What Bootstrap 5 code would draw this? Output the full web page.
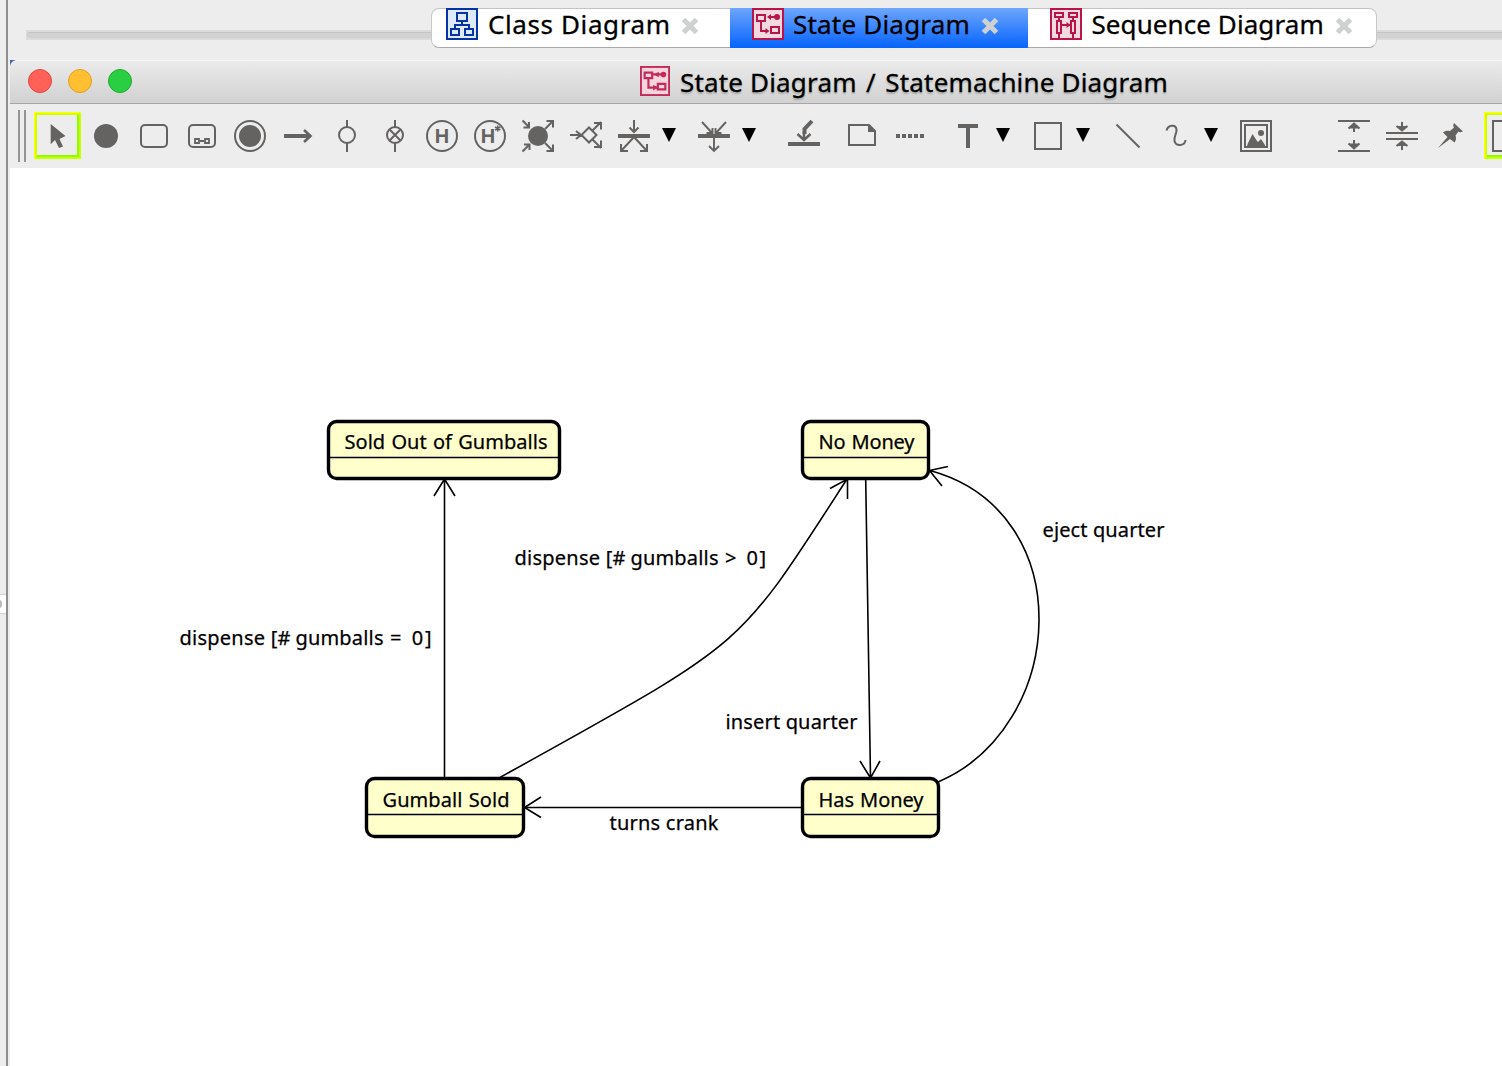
<!DOCTYPE html>
<html lang="en">
<head>
<meta charset="utf-8">
<title>State Diagram / Statemachine Diagram</title>
<link href="https://cdn.jsdelivr.net/npm/bootstrap@5.3.0/dist/css/bootstrap.min.css" rel="stylesheet">
<style>
body{width:1502px;height:1066px;overflow:hidden;background:#ededed;color:#000;font-family:"Noto Sans","Open Sans",sans-serif}
svg{display:block;flex:none}
.side-strip{width:10px;background:linear-gradient(90deg,#ededed 6px,#8e8e8e 6px,#8e8e8e 8px,#ededed 8px)}
.side-tab{height:20px;width:6px;margin-top:594px;background:#fff;border-top:1px solid #d2d2d2;border-bottom:1px solid #d2d2d2;overflow:hidden}
.side-knob{width:6px;height:8px;margin-left:-4px;border-radius:4px;background:#bbb}
.tab-zone{height:60px;padding-top:8px}
.rail{left:16px;right:0;top:30px;height:10px;background:#dbdbdb}
.rail::before{content:"";position:absolute;left:1px;right:0;top:2px;height:6px;border-radius:4px 0 0 4px;background:#d2d2d2;border-top:1px solid #c4c4c4;border-bottom:1px solid #cfcfcf}
.seg{margin-left:421px;height:40px;width:946px}
.seg-tab{height:40px;font-size:26px;line-height:32px;background:#fff;border-top:1px solid #c4c4c4;border-bottom:1px solid #a8a8a8;white-space:nowrap}
.seg-tab>svg,.seg-tab>span{margin-top:-1px}
.seg-tab>span,.win-name{-webkit-text-stroke:.3px #000}
.seg-first{width:299px;padding-left:14px;border-left:1px solid #c8c8c8;border-radius:8px 0 0 8px}
.seg-on{width:298px;padding-left:22px;border:0;background:linear-gradient(#6ea6fc,#0563ff)}
.seg-on>svg,.seg-on>span{margin-top:0}
.seg-last{width:349px;padding-left:22px;border-right:1px solid #c8c8c8;border-radius:0 8px 8px 0}
.win-title{height:44px;background:linear-gradient(#ebebeb,#d1d1d1);border-top:1px solid #f6f6f6;border-bottom:1px solid #a6a6a6;font-size:26px;line-height:38px}
.corner{left:0;top:-1px}
.lights{gap:16px;padding-left:18px;width:630px;height:40px}
.light{width:24px;height:24px;border-radius:50%;border:1px solid}
.win-name{letter-spacing:.17px;margin-left:10px;margin-top:2px;text-shadow:0 2px 2px rgba(0,0,0,.22);white-space:nowrap}
.slash{margin:0 2.500px}
.tools{height:64px;padding-left:8px;overflow:hidden}
.grip{width:8px;height:52px;margin:6px 8px 0 0;border-left:2px solid #949494;border-right:2px solid #949494}
.tools svg{fill:none;stroke:#656262;stroke-width:2;margin-top:8px}
.tools .f{fill:#656262;stroke:none}
.tools .k{fill:#000;stroke:none}
.g10{margin-left:10px}.g50{margin-left:50px}
.sheet{height:898px;background:#fff}
.nodes rect{fill:#ffffcc;stroke:#000;stroke-width:3.400}
.edges{fill:none;stroke:#000;stroke-width:1.6}
.labels{font-size:20px;fill:#000;stroke:#000;stroke-width:.25}
</style>
<script src="https://cdn.jsdelivr.net/npm/bootstrap@5.3.0/dist/js/bootstrap.bundle.min.js"></script>
</head>
<body class="d-flex m-0">
<aside class="side-strip flex-shrink-0 h-100"><div class="side-tab d-flex align-items-center"><div class="side-knob"></div></div></aside>
<main class="flex-grow-1 d-flex flex-column overflow-hidden">
  <nav class="tab-zone position-relative flex-shrink-0">
    <div class="rail position-absolute"></div>
    <div class="seg d-flex position-relative">
      <div class="seg-tab seg-first d-flex">
        <svg width="32" height="32" fill="none" stroke="#0634a6" stroke-width="2"><rect x="1" y="1" width="30" height="30" fill="#dee9fa"/><path d="M11 5h10v8H11zM5 21h8v6H5zM19 21h8v6h-8zM16 13v4M9 21v-4h14v4"/></svg>
        <span style="letter-spacing:.6px;margin-left:10px">Class Diagram</span>
        <svg class="ms-auto" style="margin-right:30px" width="20" height="32"><path d="M3.500 11.500l13 13M16.500 11.500l-13 13" stroke="#cdd1d0" stroke-width="5"/></svg>
      </div>
      <div class="seg-tab seg-on d-flex">
        <svg width="32" height="32" fill="none" stroke="#b8164a" stroke-width="2"><rect x="1" y="1" width="30" height="30" fill="#f4d9e1"/><path d="M5 7h8v6H5zM19 19h8v6h-8zM9 13v10h7M16 9h9"/><circle cx="25" cy="9" r="3" fill="#b8164a" stroke="none"/><path d="M15 9l4-3v6zM17.500 23l-4-3v6z" fill="#b8164a" stroke="none"/></svg>
        <span style="letter-spacing:.2px;margin-left:9px">State Diagram</span>
        <svg class="ms-auto" style="margin-right:28px" width="20" height="32"><path d="M3.500 11.500l13 13M16.500 11.500l-13 13" stroke="#cdd1d0" stroke-width="5"/></svg>
      </div>
      <div class="seg-tab seg-last d-flex">
        <svg width="32" height="32" fill="none" stroke="#b8164a" stroke-width="2"><rect x="1" y="1" width="30" height="30" fill="#f4d9e1"/><path d="M5 5h8v4H5zM19 5h8v4h-8zM9 9v4M23 9v4M7 13h4v12H7zM21 13h4v12h-4zM9 25v6M23 25v6M11 17h10"/><path d="M20.500 17l-4-3v6z" fill="#b8164a" stroke="none"/></svg>
        <span style="letter-spacing:.08px;margin-left:9.500px">Sequence Diagram</span>
        <svg class="ms-auto" style="margin-right:22px" width="20" height="32"><path d="M3.500 11.500l13 13M16.500 11.500l-13 13" stroke="#cdd1d0" stroke-width="5"/></svg>
      </div>
    </div>
  </nav>
  <header class="win-title d-flex position-relative flex-shrink-0">
    <svg class="corner position-absolute" width="6" height="6"><path d="M0 0H6Q1 1 0 6Z" fill="#3f66b0"/></svg>
    <div class="lights d-flex align-items-center flex-shrink-0">
      <span class="light" style="background:#ff6058;border-color:#e2463f"></span>
      <span class="light" style="background:#ffbf30;border-color:#dfa023"></span>
      <span class="light" style="background:#29ce42;border-color:#1dad2b"></span>
    </div>
    <svg width="30" height="30" viewBox="0 0 32 32" style="margin-top:5px" fill="none" stroke="#c22a59" stroke-width="2"><rect x="1" y="1" width="30" height="30" fill="#f6d5de"/><path d="M5 7h8v6H5zM19 19h8v6h-8zM9 13v10h10M13 9h12" stroke-width="2.300"/><circle cx="25" cy="9" r="3" fill="#c22a59" stroke="none"/><path d="M15 9l5-3v6zM19 23l-5-3v6z" fill="#c22a59" stroke="none"/></svg>
    <span class="win-name">State Diagram <span class="slash">/</span> Statemachine Diagram</span>
  </header>
  <div class="tools d-flex flex-shrink-0">
    <div class="grip flex-shrink-0"></div>
    <svg width="48" height="48"><rect x="1.500" y="1.500" width="44" height="44" stroke="#ccff00" stroke-width="3"/><path d="M.5 47V.5H47" stroke="#ffff00" stroke-width="1.500"/><path d="M3 44H44V3" stroke="#8cff00"/><path class="f" d="M16.700 12V32.300L21 28L25 36L29 34.500L25.500 27L31.500 24Z"/></svg>
    <svg width="48" height="48"><circle class="f" cx="24" cy="24" r="12"/></svg>
    <svg width="48" height="48"><rect x="11" y="13" width="26" height="22" rx="4"/></svg>
    <svg width="48" height="48"><rect x="11" y="13" width="26" height="22" rx="4"/><path d="M17 27h4v4h-4zM27 27h4v4h-4zM22 29h4" stroke-width="1.800"/></svg>
    <svg width="48" height="48"><circle cx="24" cy="24" r="15"/><circle class="f" cx="24" cy="24" r="11"/></svg>
    <svg width="48" height="48"><path d="M10 24H35" stroke-width="4"/><path d="M30 18L36.500 24L30 30" stroke-width="2.600"/></svg>
    <svg width="48" height="48"><circle cx="25" cy="23" r="8"/><path d="M25 8v7M25 31v9"/></svg>
    <svg width="48" height="48"><circle cx="25" cy="23" r="8"/><path d="M25 8v7M25 31v9M19.500 17.500l11 11M30.500 17.500l-11 11"/></svg>
    <svg width="48" height="48"><circle cx="24" cy="24" r="15"/><text class="f" x="24" y="31" text-anchor="middle" font-family="Liberation Sans" font-weight="bold" font-size="20">H</text></svg>
    <svg width="48" height="48"><circle cx="24" cy="24" r="15"/><text class="f" x="22" y="31" text-anchor="middle" font-family="Liberation Sans" font-weight="bold" font-size="20">H</text><path d="M31.700 13.500v6M29 15l5.400 3M34.400 15L29 18" stroke-width="1.600"/></svg>
    <svg width="48" height="48"><circle class="f" cx="24" cy="24" r="10"/><path d="M8.500 8.500L15 15M15 10v5.500H9.500M8.500 39.500L15 33M10 32.500h5.500V38M31 17l8-8M32.500 9H39v6.500M31 31l8 8M39 32.500V39h-6.500"/></svg>
    <svg width="48" height="48"><path d="M8 23H19M14 19l5 4l-5 4M27 15.500L34.500 23L27 30.500L19.500 23ZM30.500 18.500L39 10M32 11H39V17.500M30.500 27.500L39 36M32 35H39V28.500"/></svg>
    <svg width="48" height="48"><path d="M8 24H40" stroke-width="4"/><path d="M24 8V20M19.500 15.500L24 20L28.500 15.500M24 25L11.500 38.500M24 25L36.500 38.500M11 32V39H18M37 32V39H30"/></svg>
    <svg width="32" height="48"><path class="k" d="M4 16H18L11 30Z"/></svg>
    <svg width="48" height="48"><path d="M8 24H40" stroke-width="4"/><path d="M12 10L23 22M36 10L25 22M16.500 21H22.500V16M31.500 21H25.500V16M24 26V38.500M19 34L24 39L29 34" stroke-width="1.900"/></svg>
    <svg width="32" height="48"><path class="k" d="M4 16H18L11 30Z"/></svg>
    <svg class="g10" width="48" height="48"><path d="M8 32H40" stroke-width="4"/><path d="M32 9L24.500 17V22" stroke-width="4"/><path d="M24 20V28M17.500 22L24 28L30.500 22" stroke-width="2.500"/></svg>
    <svg class="g10" width="48" height="48"><path d="M11 13H31L37 19V33H11Z"/><path class="f" d="M30 12V20H38Z"/></svg>
    <svg width="48" height="48"><path d="M10 24H38" stroke-width="4" stroke-dasharray="4 2"/></svg>
    <svg class="g10" width="48" height="48"><path d="M14 14H34M24 14V36" stroke-width="4"/></svg>
    <svg width="32" height="48"><path class="k" d="M4 16H18L11 30Z"/></svg>
    <svg width="48" height="48"><rect x="11" y="11" width="26" height="26"/></svg>
    <svg width="32" height="48"><path class="k" d="M4 16H18L11 30Z"/></svg>
    <svg width="48" height="48"><path d="M12.500 12.500L35.500 35.500"/></svg>
    <svg width="48" height="48"><path d="M14.500 18.500C16 12.500 24 12 24.500 17.500C25 21.500 21.500 25 22.500 29C24 35 33 34 33.500 28"/></svg>
    <svg width="32" height="48"><path class="k" d="M4 16H18L11 30Z"/></svg>
    <svg width="48" height="48"><path d="M9 9H39V39H9ZM13 13H35V35H13Z"/><path class="f" d="M15 34L16 31L20.500 22L25 29L26 30L29 27L33 33V34Z"/><circle class="f" cx="29" cy="21" r="3"/></svg>
    <svg class="g50" width="48" height="48"><path d="M8 9H40M8 39H40M24 12V20M24 28V36M18.500 16.500L24 11.500L29.500 16.500M18.500 31.500L24 36.500L29.500 31.500"/><path class="f" d="M19 16.500L24 11L29 16.500ZM19 31.500L24 37L29 31.500Z"/></svg>
    <svg width="48" height="48"><path d="M8 21H40M8 27H40M24 10V17M24 31V38M18.500 14L24 18.500L29.500 14M18.500 34L24 29.500L29.500 34"/><path class="f" d="M19 14L24 19L29 14ZM19 34L24 29L29 34Z"/></svg>
    <svg width="48" height="48"><path class="f" d="M12 36L21.500 25L17 20.500C19 18.500 22 18.500 24 19L28 15.500C27 14 27 12.500 28 11L37 19.500C35 20.500 33.500 20.500 32.500 19.500L29.500 23.500C30.500 26 30 28.500 28.500 30.500L24 27Z"/></svg>
    <svg class="g10" width="48" height="48"><rect x="1.500" y="1.500" width="44" height="44" stroke="#ccff00" stroke-width="3"/><path d="M.5 47V.5H47" stroke="#ffff00" stroke-width="1.500"/><path d="M3 44H44" stroke="#8cff00"/><path d="M9 9H39V39H9Z"/></svg>
  </div>
  <section class="sheet flex-shrink-0">
    <svg width="1492" height="898" viewBox="10 168 1492 898">
      <g class="edges">
        <path d="M444.500 778V480M434 496L444.500 479L455 496"/>
        <path d="M500 777.500C750 638 734 654 847 479M830 488.500L847.500 479V499"/>
        <path d="M865.700 479L870.500 778M860 761L870.500 778L880 761"/>
        <path d="M938 782C1067 727 1081 512 930 470.500M948 466.500L929.500 470.500L942 486"/>
        <path d="M802 807.500H525M541 797L524.500 807.500L541 817.500"/>
      </g>
      <g class="nodes">
        <rect x="328.500" y="421.500" width="231" height="57" rx="8"/>
        <rect x="802.500" y="421.500" width="126" height="57" rx="8"/>
        <rect x="366.500" y="778.500" width="157" height="58" rx="8"/>
        <rect x="802.500" y="778.500" width="136" height="58" rx="8"/>
        <path d="M330 457.500H558M804 457.500H927M368 814.500H522M804 814.500H937" stroke="#000" stroke-width="1.600"/>
      </g>
      <g class="labels">
        <text x="344.500" y="449" textLength="203" word-spacing="1">Sold Out of Gumballs</text>
        <text x="818.500" y="449" textLength="96" word-spacing="1">No Money</text>
        <text x="382.500" y="807" textLength="127" word-spacing="1">Gumball Sold</text>
        <text x="818.500" y="807" textLength="105" word-spacing="1">Has Money</text>
        <text y="565"><tspan x="514.500" textLength="111">dispense [#</tspan> <tspan x="630.500" textLength="88">gumballs</tspan> <tspan x="725" textLength="41" word-spacing="2">&gt; 0]</tspan></text>
        <text y="645"><tspan x="179.500" textLength="111">dispense [#</tspan> <tspan x="295.500" textLength="88">gumballs</tspan> <tspan x="390" textLength="41.500" word-spacing="2">= 0]</tspan></text>
        <text x="725.500" y="729" textLength="132">insert quarter</text>
        <text x="1042.500" y="537" textLength="122">eject quarter</text>
        <text x="609.500" y="830" textLength="109">turns crank</text>
      </g>
    </svg>
  </section>
</main>
</body>
</html>
